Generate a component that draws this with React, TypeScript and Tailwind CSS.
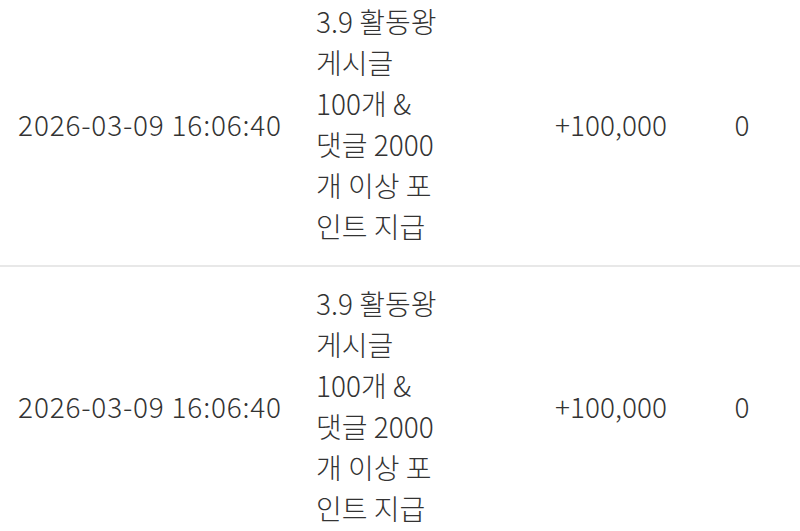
const rows = [
  {
    date: "2026-03-09 16:06:40",
    desc: "3.9 활동왕 게시글 100개 & 댓글 2000개 이상 포인트 지급",
    amount: "+100,000",
    balance: "0",
  },
  {
    date: "2026-03-09 16:06:40",
    desc: "3.9 활동왕 게시글 100개 & 댓글 2000개 이상 포인트 지급",
    amount: "+100,000",
    balance: "0",
  },
];

export default function App() {
  return (
    <div
      className="w-[800px] h-[531px] overflow-hidden bg-white text-[#333333]"
      style={{ fontFamily: '"Noto Sans CJK KR", "Noto Sans", sans-serif' }}
    >
      <div className="-mt-[15px]">
        {rows.map((row, i) => (
          <div
            key={i}
            className="flex items-center pt-4 pb-[18px] text-[28px] font-light leading-[41px] border-b-2 border-[#e8e8e8]"
          >
            <div className="w-[300px] shrink-0 text-center whitespace-nowrap tracking-[0.8px]">{row.date}</div>
            <div className="w-[138px] shrink-0 pl-4">{row.desc}</div>
            <div className="w-[200px] shrink-0 ml-[73px] text-center">{row.amount}</div>
            <div className="w-[62px] shrink-0 text-center">{row.balance}</div>
          </div>
        ))}
      </div>
    </div>
  );
}
